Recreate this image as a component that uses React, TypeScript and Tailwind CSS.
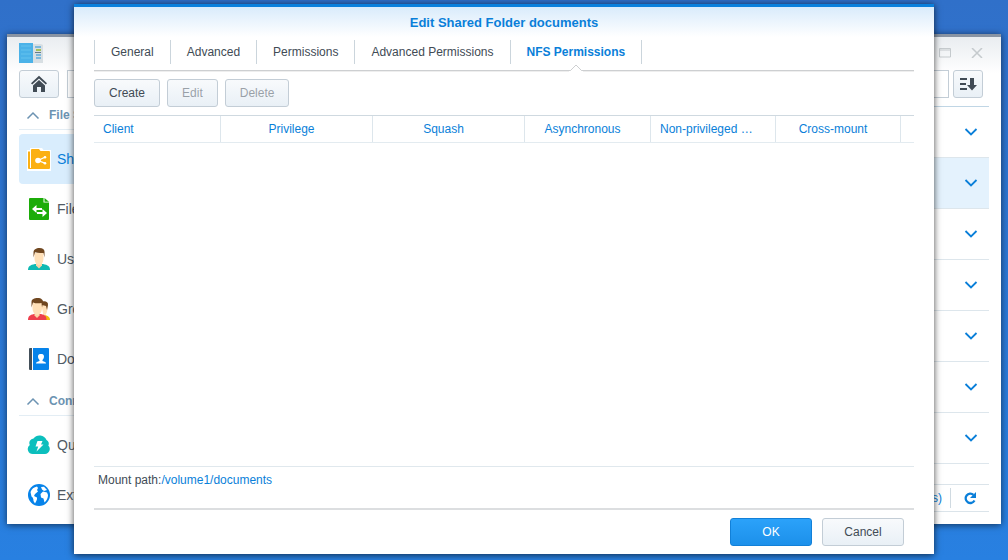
import React from "react";

const tabs = ["General", "Advanced", "Permissions", "Advanced Permissions", "NFS Permissions"];

const columns = [
	{ label: "Client", width: "w-[127px]" },
	{ label: "Privilege", width: "w-[152px]" },
	{ label: "Squash", width: "w-[152px]" },
	{ label: "Asynchronous", width: "w-[126px]" },
	{ label: "Non-privileged port", width: "w-[125px]" },
	{ label: "Cross-mount", width: "w-[125px]" },
];

const folders = ["backup", "documents", "homes", "music", "photo", "video", "web"];

const FolderIcon = () => (
	<svg width="24" height="24" viewBox="0 0 24 24">
		<path d="M0 3h3V1h12l1.500 2H24v21H0z" fill="#fff" />
		<path d="M1 4.500h2V21h1v1H2a1 1 0 0 1-1-1z" fill="#fbb013" />
		<path d="M4 4V3a1 1 0 0 1 1-1h7l1.500 2H22a1 1 0 0 1 1 1v16a1 1 0 0 1-1 1H4z" fill="#fbb013" />
		<path d="M18.500 10 11 13.500l7.500 2.800" fill="none" stroke="#fff" strokeWidth="1.300" />
		<circle cx="11" cy="13.500" r="2.800" fill="#fff" />
		<circle cx="18" cy="10.300" r="1.300" fill="#fff" />
		<circle cx="18" cy="16.200" r="1.300" fill="#fff" />
	</svg>
);

const FileServicesIcon = () => (
	<svg width="24" height="24" viewBox="0 0 24 24">
		<path d="M3 1h13.500v4.500H22V22a1 1 0 0 1-1 1H3a1 1 0 0 1-1-1V2a1 1 0 0 1 1-1z" fill="#1cac09" />
		<path d="m17.500 1 4.500 3.800h-4.500z" fill="#1cac09" />
		<path d="M5 12 9.500 8v3H15v2H9.500v3zM20 16l-4.500-4v3H10v2h5.500v3z" fill="#fff" />
	</svg>
);

const UserIcon = () => (
	<svg width="24" height="24" viewBox="0 0 24 24">
		<path d="M1 23c0-3.500 2-5 7-6h8c5 1 7 2.500 7 6z" fill="#0fb9b3" />
		<path d="M9 15h6v3.500L12 21.500 9 18.500z" fill="#fbd3a4" />
		<path d="M7.500 6h9v5c0 4-2 7-4.500 7s-4.500-3-4.500-7z" fill="#ffe0b8" />
		<path d="M6.500 10.500V5.500C6.500 2.500 9 1 12.500 1 16 1 18 2.500 17.500 6v4.500l-1-4.500c-3 0-6 .3-8.500-.7z" fill="#704720" />
	</svg>
);

const GroupIcon = () => (
	<svg width="24" height="24" viewBox="0 0 24 24">
		<path d="M16 23v-5c4 0 7 1.500 7 5z" fill="#f2b90d" />
		<path d="M14 6h6.500v5c0 3.500-1.500 8-4 8z" fill="#ffe0b8" />
		<path d="M13.500 5.500C16 3.500 21.500 3.500 21 8l-1 5-1-4-4-1z" fill="#704720" />
		<path d="M1 23c0-3.500 1.500-5 6-6h7c4.500 1 5.500 2.500 5.500 6z" fill="#ee3f4d" />
		<path d="M7.500 15h5v3.500L10 21l-2.500-2.500z" fill="#fbd3a4" />
		<path d="M5.500 6H15v5c0 4-2.200 7-4.700 7S5.500 15 5.500 11z" fill="#ffe0b8" />
		<path d="M4.500 10.500V5C4.500 2 7.500 1 10.500 1c4 0 6 2 5.500 5l-1 4.500-.5-4.500c-3 .5-6 .5-8.500-.5z" fill="#704720" />
	</svg>
);

const DomainIcon = () => (
	<svg width="24" height="24" viewBox="0 0 24 24">
		<path d="M3 1h2v22H3a1 1 0 0 1-1-1V2a1 1 0 0 1 1-1z" fill="#44505a" />
		<path d="M6 1h15a1 1 0 0 1 1 1v20a1 1 0 0 1-1 1H6z" fill="#0683ea" />
		<path d="M11 9.500C11 7.500 12.300 7 14 7s3 .5 3 2.500c0 1.500-.7 2.800-1.500 3.500v1c2 .5 3.500 1 3.500 2.500H9c0-1.500 1.500-2 3.500-2.500v-1c-.8-.7-1.500-2-1.500-3.500z" fill="#fff" />
	</svg>
);

const CloudIcon = () => (
	<svg width="24" height="24" viewBox="0 0 24 24">
		<path d="M6 21a5 5 0 0 1-3.200-9A4.500 4.500 0 0 1 6.500 5.500 7.500 7.500 0 0 1 19.500 7a4 4 0 0 1 1.800 5.500A5 5 0 0 1 18 21z" fill="#0cbfbd" />
		<path d="M10.500 8H15.500l-1.500 3.500h2.500L9.500 18.500l1.700-5H8.500z" fill="#fff" />
	</svg>
);

const GlobeIcon = () => (
	<svg width="24" height="24" viewBox="0 0 24 24">
		<circle cx="12" cy="12" r="11" fill="#0683ea" />
		<path d="M3.500 9C4.500 6 7 4 10 3.500l1 1.500-1 2 1 1.500-3 2.500-1 2 3 1.500c.5 2-1 4-2 6L6.500 18c0-2-.5-3.500-2-4.500zM14 4l3-.2 3 3.200-3 1-2-1.500zM13.500 11l2.500-2.500 4 1 1 2.500c0 3-1.500 5.500-3.500 7.500l-1-4-2.500-1z" fill="#fff" />
	</svg>
);

const ControlPanelIcon = () => (
	<svg width="24" height="20" viewBox="0 0 24 20" aria-hidden="true">
		<rect width="14" height="20" fill="#4bb2e8" />
		<path d="M2 3h10M2 7h10M2 11h10M2 15h10" stroke="#64c2ee" />
		<path d="M14 1h8l2 1v18H14z" fill="#d8dfe3" />
		<path d="M16 4h6M17 12h5M17 15h5" stroke="#7cb8dc" strokeWidth="2" />
		<path d="M17 7h5" stroke="#a6c25a" strokeWidth="2" />
		<path d="M16 9.500h6" stroke="#677b87" />
	</svg>
);

const Chevron = ({ up = false }: { up?: boolean }) => (
	<svg width="14" height="8" viewBox="0 0 14 8" aria-hidden="true">
		<path
			d={up ? "M1.500 7.500 7 2l5.500 5.500" : "M1.500 1 7 6.500 12.500 1"}
			fill="none"
			stroke="currentColor"
			strokeWidth={up ? 1.500 : 1.800}
		/>
	</svg>
);

const sections = [
	{
		title: "File Sharing",
		items: [
			{ label: "Shared Folder", icon: <FolderIcon />, active: true },
			{ label: "File Services", icon: <FileServicesIcon /> },
			{ label: "User", icon: <UserIcon /> },
			{ label: "Group", icon: <GroupIcon /> },
			{ label: "Domain/LDAP", icon: <DomainIcon /> },
		],
	},
	{
		title: "Connectivity",
		items: [
			{ label: "QuickConnect", icon: <CloudIcon /> },
			{ label: "External Access", icon: <GlobeIcon /> },
		],
	},
];

const grayButton =
	"h-7 rounded-[3px] border border-[#c3cdd6] bg-gradient-to-b from-[#f8fafc] to-[#e9f0f6] text-[#414b55]";

const Sidebar = () => (
	<nav className="w-[220px] shrink-0">
		{sections.map((section) => (
			<div key={section.title}>
				<h2 className="flex h-8 items-center gap-[9px] border-b border-[#e3edf4] pl-[7px] pt-0.5 font-bold text-[#6c93b2]">
					<Chevron up />
					{section.title}
				</h2>
				<ul className="pt-1">
					{section.items.map((item) => (
						<li key={item.label}>
							<a
								href="#"
								className={`flex h-[50px] items-center gap-1.5 rounded-sm pl-2 text-sm ${
									item.active ? "bg-[#d9edfd] text-[#0a7fd9]" : "text-[#505a64]"
								}`}
							>
								{item.icon}
								{item.label}
							</a>
						</li>
					))}
				</ul>
			</div>
		))}
	</nav>
);

const ControlPanel = () => (
	<section className="absolute inset-x-[7px] top-[34px] bottom-9 flex flex-col border-t-3 border-[#8994a3] bg-white bg-gradient-to-b from-[#e9edf0] to-white to-[36px] px-3 shadow-[0_1px_7px_rgba(0,0,0,0.6)]">
		<header className="flex h-[33px] items-center justify-between pr-1.5 pb-0.5">
			<ControlPanelIcon />
			<div className="flex gap-5 text-[#c5cacd]">
				<button aria-label="Maximize">
					<svg width="12" height="10" viewBox="0 0 12 10">
						<path d="M.5.5h11v8.500H.5zM1 2h10" fill="none" stroke="currentColor" />
					</svg>
				</button>
				<button aria-label="Close">
					<svg width="12" height="10" viewBox="0 0 12 10">
						<path d="m1 0 10 10M11 0 1 10" stroke="currentColor" strokeWidth="1.500" />
					</svg>
				</button>
			</div>
		</header>
		<div className="flex h-7 shrink-0 pr-1.5">
			<button aria-label="Home" className={`${grayButton} mr-2 flex w-10 items-center justify-center`}>
				<svg width="18" height="18" viewBox="0 0 18 18" fill="#414b55">
					<path d="M9 .8 1 8.300l1.200 1.300L9 3.500l6.800 6.100L17 8.300z" />
					<path d="M9 5 3 10.500V17h4v-5h4v5h4v-6.500z" />
				</svg>
			</button>
			<input aria-label="Search" className="mr-1 min-w-0 flex-1 border border-[#c3cdd6] bg-white px-2" />
			<button aria-label="Sort" className={`${grayButton} flex w-[30px] items-center justify-center`}>
				<svg width="18" height="14" viewBox="0 0 18 14" fill="#414b55">
					<path d="M1 1h7v2H1zM1 6h6v2H1zM1 11h7v2H1zM11 1h4v7h3l-5 5.500L8 8h3z" />
				</svg>
			</button>
		</div>
		<div className="flex min-h-0 flex-1">
			<Sidebar />
			<div className="min-w-0 flex-1 pt-2">
				<ul className="border-t border-[#c0d6e5]">
					{folders.map((name) => (
						<li
							key={name}
							className={`flex h-[51px] items-center justify-end border-b border-[#dde6ec] pr-[11px] text-[#0a7fd9] ${
								name === "documents" ? "bg-[#e4f2fd]" : ""
							}`}
						>
							<button aria-label={`Show ${name}`}>
								<Chevron />
							</button>
						</li>
					))}
				</ul>
				<footer className="mt-5 flex h-7 items-center justify-end border-y border-[#dbe4ea] text-[#0a7fd9]">
					<span className="pr-2">7 item(s)</span>
					<button aria-label="Refresh" className="flex h-5 w-[39px] items-center justify-center border-l border-[#d0dae1]">
						<svg width="14" height="14" viewBox="0 0 14 14">
							<path d="M10.500 3.800A4.700 4.700 0 1 0 11.500 9.500" fill="none" stroke="currentColor" strokeWidth="2.300" />
							<path d="M13 1v6H7z" fill="currentColor" />
						</svg>
					</button>
				</footer>
			</div>
		</div>
	</section>
);

const EditDialog = () => (
	<div
		role="dialog"
		aria-labelledby="dialog-title"
		className="absolute inset-x-[74px] top-1 bottom-1.5 flex flex-col border-t-3 border-[#0b80dc] bg-white bg-gradient-to-b from-[#d9ebfb] to-white to-[30px] px-5 shadow-[0_1px_7px_rgba(0,0,0,0.7)]"
	>
		<h1 id="dialog-title" className="h-[33px] text-center text-[13px] leading-8 font-bold text-[#0a7fd9]">
			Edit Shared Folder documents
		</h1>
		<div
			role="tablist"
			className="flex h-[31px] shrink-0 items-start border-b border-[#cdcfd1] shadow-[0_1px_0_#eeeeee]"
		>
			{tabs.map((tab) => {
				const active = tab === "NFS Permissions";
				return (
					<button
						key={tab}
						role="tab"
						aria-selected={active}
						className={`relative h-6 border-l border-[#cbd5dc] px-4 whitespace-nowrap last:border-r ${
							active ? "font-bold text-[#0a7fd9]" : ""
						}`}
					>
						{tab}
						{active && (
							<svg className="absolute top-6 left-1/2 -translate-x-1/2" width="16" height="8" viewBox="0 0 16 8">
								<path d="M1 8V6.500h1.500L8 1l5.500 5.500H15V8z" fill="#fff" />
								<path d="M1 6.500h1.500L8 1l5.500 5.500H15" fill="none" stroke="#cdcfd1" />
							</svg>
						)}
					</button>
				);
			})}
		</div>

		<div className="flex gap-[7px] py-2">
			<button className={`${grayButton} px-3.5`}>Create</button>
			<button disabled className={`${grayButton} px-3.5 text-[#414b55]/50`}>
				Edit
			</button>
			<button disabled className={`${grayButton} px-3.5 text-[#414b55]/50`}>
				Delete
			</button>
		</div>

		<div className="min-h-0 flex-1">
			<table className="w-full table-fixed border-separate border-spacing-0 border-y border-t-[#cfd9e0] border-b-[#e3ebf0]">
				<thead>
					<tr className="h-[26px]">
						{columns.map((column) => (
							<th
								key={column.label}
								className={`${column.width} truncate border-r border-[#dde6ec] pr-[19px] pl-[9px] font-normal text-[#0a7fd9] first:text-left`}
							>
								{column.label}
							</th>
						))}
						<td />
					</tr>
				</thead>
			</table>
		</div>

		<div className="h-[42px] border-t border-[#e0e8ed] px-1 leading-[26px]">
			Mount path:
			<a href="#" className="text-[#0a7fd9]">
				/volume1/documents
			</a>
		</div>
		<div className="flex justify-end gap-2.5 border-t-2 border-[#dcdee0] px-2.5 py-2">
			<button className="h-7 w-[82px] rounded-[3px] border border-[#1280d8] bg-gradient-to-b from-[#2ba2fa] to-[#1c90ea] text-white">
				OK
			</button>
			<button className={`${grayButton} w-[82px]`}>Cancel</button>
		</div>
	</div>
);

const App = () => (
	<main className="relative h-screen min-h-[540px] overflow-hidden bg-gradient-to-b from-[#3070c9] to-[#2880e1] font-['Liberation_Sans',Arial,sans-serif] text-xs text-[#414b55]">
		<ControlPanel />
		<EditDialog />
	</main>
);

export default App;
